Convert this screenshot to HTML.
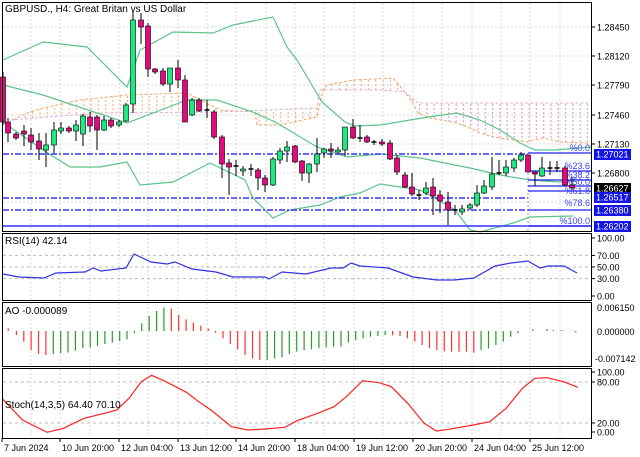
<!DOCTYPE html>
<html><head><meta charset="utf-8">
<style>
html,body{margin:0;padding:0;background:#fff;}
svg{display:block;font-family:"Liberation Sans",sans-serif;}
</style></head>
<body>
<svg id="s" width="640" height="457" viewBox="0 0 640 457" xmlns="http://www.w3.org/2000/svg">
<defs>
<pattern id="po" width="7.3" height="4" patternUnits="userSpaceOnUse"><rect x="3" y="0" width="1" height="2" fill="#f4a460"/></pattern>
<pattern id="pp" width="7.3" height="4" patternUnits="userSpaceOnUse"><rect x="3" y="0" width="1" height="2" fill="#d8a8d8"/></pattern>
</defs>
</svg>
<script>
var s=document.getElementById('s');var o='';
function L(x1,y1,x2,y2,c,w,d){o+='<line x1="'+x1+'" y1="'+y1+'" x2="'+x2+'" y2="'+y2+'" stroke="'+c+'" stroke-width="'+(w||1)+'"'+(d?' stroke-dasharray="'+d+'"':'')+'/>';}
function T(x,y,t,c,a,fs){o+='<text x="'+x+'" y="'+y+'" font-size="'+(fs||9)+'" fill="'+(c||'#000')+'"'+(a?' text-anchor="'+a+'"':'')+'>'+t+'</text>';}
function P(pts,c,w,d){o+='<polyline fill="none" points="'+pts.map(function(p){return p.join(',')}).join(' ')+'" stroke="'+c+'" stroke-width="'+(w||1)+'"'+(d?' stroke-dasharray="'+d+'"':'')+'/>';}
var vx=[31,60,90,119,148,178,207,236,266,295,324,354,383,413,442,472,501,530,560];
vx.forEach(function(x){L(x,3,x,230,'#d8d8d8',1,'2,2');L(x,234,x,299,'#d8d8d8',1,'2,2');L(x,303,x,365,'#d8d8d8',1,'2,2');L(x,369,x,437,'#d8d8d8',1,'2,2');});
[27,56,85,115,144,173,202].forEach(function(y){L(3,y,591,y,'#d8d8d8',1,'2,2');});
var ora=[[13,120],[27,113],[43,108],[80,100],[127,95],[187,93],[220,110],[255,112],[257,125],[280,125],[317,117],[323,90],[327,85],[353,80],[393,78],[400,86],[413,103],[418,113],[430,118],[457,123],[470,128],[480,133],[493,137],[527,142],[543,138],[560,142],[588,143]];
var pur=[[10,120],[100,113],[220,112],[317,108],[320,90],[380,90],[405,92],[418,103],[588,103]];
var poly=ora.concat(pur.slice().reverse());
o+='<polygon points="'+poly.map(function(p){return p.join(',')}).join(' ')+'" fill="url(#po)" opacity="0.9"/>';
o+='<clipPath id="cr"><rect x="405" y="0" width="200" height="240"/></clipPath>';
o+='<polygon clip-path="url(#cr)" points="'+poly.map(function(p){return p.join(',')}).join(' ')+'" fill="url(#pp)"/>';
P(ora,'#f4a460',1,'3,2');P(pur,'#d8b0d8',1,'3,2');
P([[3,60],[43,42],[87,47],[127,87],[140,50],[173,32],[213,33],[233,25],[273,17],[287,47],[297,60],[322,102],[345,122],[355,126],[380,125],[410,120],[435,116],[457,113],[480,120],[500,130],[520,143],[535,150],[555,150],[591,147]],'#5cc48a',1.2);
P([[3,85],[43,95],[127,123],[187,100],[217,100],[253,112],[277,123],[317,147],[347,157],[380,154],[420,158],[470,168],[500,175],[530,180],[560,182],[575,180]],'#5cc48a',1.2);
P([[3,122],[43,150],[70,167],[100,167],[127,162],[140,185],[173,182],[210,163],[245,180],[253,198],[273,218],[290,210],[320,205],[340,197],[360,193],[380,184],[420,190],[433,197],[455,210],[470,230],[480,232],[513,223],[530,217],[573,216]],'#5cc48a',1.2);
L(3,154,528,154,'#3333ff',1.5,'6,2,2,2');L(3,198,528,198,'#3333ff',1.5,'6,2,2,2');L(3,210,528,210,'#3333ff',1.5,'6,2,2,2');L(3,226,591,226,'#3333ff',1.5);
L(528,153,528,231,'#999',1,'2,2');
[153,171,180,186,191,210,226].forEach(function(y){L(528,y,591,y,'#2222ee',1.2);});
[['%0.0',151],['%23.6',169],['%38.2',178],['%50.0',185],['%61.8',194],['%78.6',206],['%100.0',224]].forEach(function(a){T(590,a[1],a[0],'#3344ff','end',9);});
var C=[[3,77,122,72,125],[8,122,133,118,142],[16,134,138,132,140],[24,131,134,125,146],[31,135,142,128,150],[39,141,149,133,160],[46,150,145,133,167],[54,145,130,122,153],[61,131,128,122,134],[69,128,131,126,133],[76,131,125,120,141],[83,134,116,114,146],[90,117,126,112,132],[97,117,130,115,150],[104,130,120,116,131],[111,120,126,118,128],[119,125,122,120,127],[126,121,105,103,122],[133,104,20,12,113],[141,20,27,13,44],[148,26,69,23,77],[155,69,72,68,74],[163,71,84,68,86],[170,84,68,68,92],[178,68,80,60,88],[185,80,122,75,122],[192,115,100,98,116],[199,100,111,98,112],[207,110,111,100,118],[214,112,137,110,139],[222,137,164,135,178],[229,163,167,159,195],[236,166,167,160,176],[243,171,169,166,176],[251,169,170,164,176],[258,170,178,168,190],[265,178,185,175,192],[273,185,159,157,186],[280,160,151,148,164],[287,151,147,141,162],[295,146,162,145,163],[302,161,173,160,181],[309,173,164,163,183],[317,164,154,138,172],[324,153,149,148,158],[331,149,151,143,158],[338,152,150,147,155],[345,150,127,127,156],[353,127,138,119,139],[360,138,139,125,142],[367,137,142,135,143],[374,142,143,140,145],[382,142,144,139,146],[390,143,159,140,160],[397,158,172,155,175],[405,175,187,172,188],[412,187,194,173,196],[419,195,196,190,200],[426,193,188,182,195],[433,187,196,178,215],[440,195,201,190,213],[448,202,210,192,225],[455,210,211,205,215],[462,212,209,205,215],[470,208,205,203,210],[477,205,193,185,207],[484,193,186,180,194],[492,187,174,157,190],[499,173,174,160,175],[506,173,167,160,176],[514,168,160,158,172],[521,160,155,152,162],[528,155,172,155,172],[535,172,174,172,186],[542,176,168,157,177],[550,168,169,161,175],[557,168,169,161,172],[565,168,185,166,186],[572,185,188,177,190]];
C.forEach(function(c){var x=c[0],t=Math.min(c[1],c[2]),b=Math.max(c[1],c[2]);L(x,c[3],x,c[4],'#000',1);
 if(b-t<1.5){L(x-2.5,t,x+2.5,t,'#000',1.5);}else{o+='<rect x="'+(x-2.5)+'" y="'+t+'" width="5" height="'+(b-t)+'" fill="'+(c[2]<c[1]?'#1fe87e':'#e6087e')+'" stroke="#000" stroke-width="0.6"/>';}});
T(5,12,'GBPUSD., H4:  Great Britan vs US Dollar','#000',null,10);
function ry(v){return 238+(100-v)*0.58;}
[70,50,30].forEach(function(v){L(3,ry(v),591,ry(v),'#bbb',1,'3,3');});
var rs=[[0,274],[16,277],[41,278],[53,273],[82,272],[90,268],[98,271],[123,268],[131,254],[148,262],[164,264],[172,262],[189,269],[213,272],[230,277],[262,277],[266,279],[279,272],[303,274],[328,268],[340,268],[348,263],[357,266],[385,268],[410,277],[434,280],[451,280],[471,278],[492,266],[508,263],[525,261],[537,268],[545,266],[561,266],[574,273]];
P(rs.map(function(p){return [p[0]+3,p[1]];}),'#3333dd',1.2);
T(5,244,'RSI(14) 42.14','#000',null,10);
var ao=[[20,295,'r'],[40,315,'r'],[58,335,'r'],[76,360,'r'],[94,372,'r'],[112,375,'r'],[130,372,'g'],[148,370,'g'],[166,368,'g'],[184,362,'g'],[202,355,'g'],[220,352,'g'],[238,348,'g'],[256,342,'g'],[274,338,'g'],[292,333,'g'],[310,328,'g'],[328,310,'g'],[346,280,'g'],[364,258,'g'],[382,243,'g'],[400,233,'g'],[418,236,'r'],[436,255,'r'],[454,268,'r'],[472,278,'r'],[490,287,'r'],[508,295,'r'],[526,308,'r'],[544,325,'r'],[562,342,'r'],[580,358,'r'],[598,375,'r'],[616,385,'r'],[634,390,'r'],[652,390,'g'],[670,385,'g'],[688,382,'g'],[706,372,'g'],[724,365,'g'],[742,360,'g'],[760,358,'g'],[778,355,'g'],[796,352,'g'],[814,350,'g'],[832,350,'g'],[850,338,'g'],[868,330,'g'],[886,325,'g'],[904,320,'g'],[922,318,'g'],[940,315,'g'],[958,316,'r'],[976,318,'r'],[994,325,'r'],[1012,335,'r'],[1030,345,'r'],[1048,355,'r'],[1066,360,'r'],[1084,364,'r'],[1102,365,'r'],[1120,365,'r'],[1138,365,'r'],[1156,368,'r'],[1174,360,'g'],[1192,355,'g'],[1210,345,'g'],[1228,335,'g'],[1246,320,'g'],[1264,310,'g'],[1300,298,'g'],[1335,297,'g'],[1350,300,'r'],[1370,300,'r'],[1405,307,'r']];
ao.forEach(function(a){var x=(a[0]/2.44).toFixed(1),y=230+a[1]/3,z=331;L(x,z,x,y,a[2]=='r'?'#ff3030':'#2a9a2a',1.2);});
T(5,314,'AO -0.000089','#000',null,10);
[382,423].forEach(function(y){L(3,y,591,y,'#bbb',1,'3,3');});
var st=[[0,505],[50,570],[110,607],[150,595],[200,565],[250,550],[280,540],[310,505],[340,455],[365,436],[400,455],[450,487],[480,515],[510,540],[560,590],[600,600],[640,597],[690,592],[720,572],[770,550],[810,530],[840,500],[880,452],[920,458],[950,470],[990,520],[1030,580],[1060,603],[1090,598],[1150,585],[1190,575],[1230,535],[1270,475],[1300,445],[1330,443],[1370,455],[1405,472]];
P(st.map(function(p){return [(p[0]/2.44+2).toFixed(1),(230+p[1]/3).toFixed(1)];}),'#ff2020',1.2);
T(5,408,'Stoch(14,3,5) 64.40 70.10','#000',null,10);
function F(y1,y2){o+='<rect x="2.5" y="'+y1+'" width="589" height="'+(y2-y1)+'" fill="none" stroke="#000" stroke-width="1"/>';}
F(2.5,231.5);F(233.5,300.5);F(302.5,366.5);F(368.5,438.5);
[['1.28450',27],['1.28120',56],['1.27790',85],['1.27460',115],['1.27130',144],['1.26800',173]].forEach(function(a){L(591,a[1],595,a[1],'#000');T(597,a[1]+3.5,a[0]);});
[['1.27021',154,'#1414e6'],['1.26627',188,'#000'],['1.26517',197,'#1414e6'],['1.26380',210,'#1414e6'],['1.26202',226,'#1414e6']].forEach(function(a){o+='<rect x="594" y="'+(a[1]-5)+'" width="37" height="11" fill="'+a[2]+'"/>';T(596,a[1]+3.5,a[0],'#fff');});
[['100.00',ry(100)],['70.00',ry(70)],['50.00',ry(50)],['30.00',ry(30)],['0.00',ry(0)]].forEach(function(a){L(591,a[1],595,a[1],'#000');T(597,a[1]+3.5,a[0]);});
T(597,311,'0.006150');T(597,335,'0.000000');T(595,362,'-0.007142');
[['100.00',372],['80.00',382],['20.00',423],['0.00',432]].forEach(function(a){L(591,a[1],595,a[1],'#000');T(597,a[1]+3.5,a[0]);});
[['7 Jun 2024',2],['10 Jun 20:00',60],['12 Jun 04:00',119],['13 Jun 12:00',178],['14 Jun 20:00',236],['18 Jun 04:00',295],['19 Jun 12:00',354],['20 Jun 20:00',413],['24 Jun 04:00',472],['25 Jun 12:00',530]].forEach(function(a){L(a[1],438,a[1],442,'#000');T(a[1]+2,451,a[0]);});
s.insertAdjacentHTML('beforeend',o);
</script>
</body></html>
